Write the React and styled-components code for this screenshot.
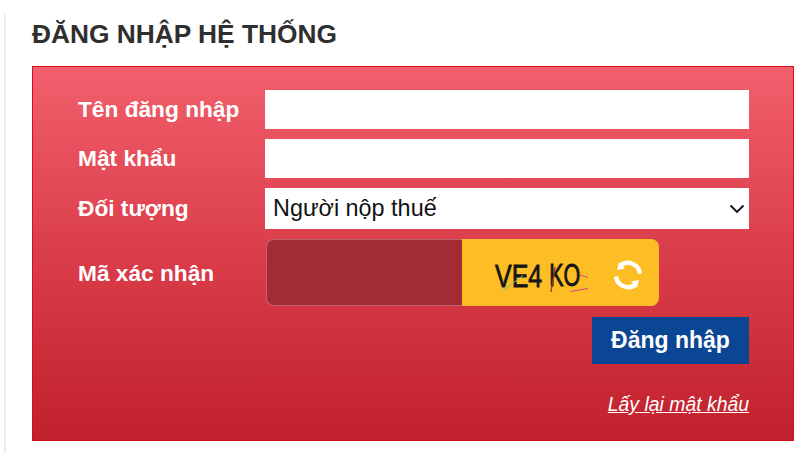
import React from "react";
import styled, { createGlobalStyle } from "styled-components";

const GlobalStyle = createGlobalStyle`
  html, body {
    margin: 0;
    padding: 0;
    background: #fff;
    overflow: hidden;
  }
  * { box-sizing: border-box; }
`;

const App = () => (
  <>
    <GlobalStyle />
    <Page>
      <Content>
        <Title>ĐĂNG NHẬP HỆ THỐNG</Title>
        <Panel>
          <Row>
            <Label>Tên đăng nhập</Label>
            <TextInput type="text" />
          </Row>
          <Row>
            <Label>Mật khẩu</Label>
            <TextInput type="password" />
          </Row>
          <Row>
            <Label>Đối tượng</Label>
            <SelectBox>
              <span>Người nộp thuế</span>
              <svg width="16" height="10" viewBox="0 0 16 10" fill="none">
                <path d="M1.5 1.5 L8 8 L14.5 1.5" stroke="#111" strokeWidth="1.9" />
              </svg>
            </SelectBox>
          </Row>
          <CaptchaRow>
            <CaptchaLabel>Mã xác nhận</CaptchaLabel>
            <CaptchaGroup>
              <CaptchaInput type="text" />
              <CaptchaBox>
                <CaptchaImage>
                  <CaptchaText $size={25} $stretch={1.28}>VE4</CaptchaText>
                  <CaptchaText $size={21.5} $stretch={1.49}>KO</CaptchaText>
                  <Scribble width="110" height="40" viewBox="0 0 110 40" fill="none">
                    <path d="M13 37.5 L33 22.5" stroke="#6fbf9a" strokeWidth="1" />
                    <path d="M65 14 L61 39" stroke="#8a3a20" strokeWidth="1.3" />
                    <path d="M90 22 L98 24.5" stroke="#c9506a" strokeWidth="1" />
                    <path d="M80 38.5 L98 35.5" stroke="#d8407a" strokeWidth="1" />
                  </Scribble>
                </CaptchaImage>
                <RefreshIcon width="32" height="32" viewBox="0 0 32 32" fill="none">
                  <path d="M28 14.5 A12.2 12.2 0 0 0 8 6.8" stroke="#fff" strokeWidth="4.4" />
                  <path d="M4 17.5 A12.2 12.2 0 0 0 24 25.2" stroke="#fff" strokeWidth="4.4" />
                  <path d="M5 11 L7 3.5 L13 9.5 Z" fill="#fff" />
                  <path d="M27 21 L25 28.5 L19 22.5 Z" fill="#fff" />
                </RefreshIcon>
              </CaptchaBox>
            </CaptchaGroup>
          </CaptchaRow>
          <Actions>
            <SubmitButton>Đăng nhập</SubmitButton>
            <ForgotLink href="#">Lấy lại mật khẩu</ForgotLink>
          </Actions>
        </Panel>
      </Content>
    </Page>
  </>
);

export default App;

const Page = styled.div`
  width: 800px;
  height: 453px;
  padding: 14px 6px 0 4px;
  font-family: "Liberation Sans", Arial, sans-serif;
`;

const Content = styled.div`
  height: 100%;
  border-left: 2px solid #eeeeee;
  padding-left: 26px;
`;

const Title = styled.h2`
  margin: 0;
  height: 52px;
  padding-top: 5px;
  font-size: 26.3px;
  line-height: 30px;
  font-weight: bold;
  color: #2f2f2f;
`;

const Panel = styled.div`
  width: 762px;
  height: 375px;
  padding: 23px 44px 0 45px;
  border: 1px solid #d40f1c;
  background: linear-gradient(to bottom, #f25f6c 0%, #d83a47 55%, #c0212c 100%);
`;

const Row = styled.div`
  display: flex;
  align-items: center;
  margin-bottom: 10px;
`;

const Label = styled.label`
  width: 187px;
  flex: none;
  font-size: 22.7px;
  font-weight: bold;
  color: #fff;
`;

const TextInput = styled.input`
  width: 484px;
  height: 39px;
  border: none;
  background: #fff;
  display: block;
`;

const SelectBox = styled.div`
  width: 484px;
  height: 41px;
  padding: 0 4px 0 8px;
  display: flex;
  align-items: center;
  justify-content: space-between;
  background: #fff;
  color: #111;
  font-size: 23.4px;
`;

const CaptchaRow = styled.div`
  display: flex;
  align-items: flex-start;
`;

const CaptchaLabel = styled(Label)`
  padding-top: 21px;
  line-height: 26px;
`;

const CaptchaGroup = styled.div`
  display: flex;
  height: 67px;
  margin-left: 1px;
`;

const CaptchaInput = styled.input`
  width: 196px;
  height: 67px;
  background: #a22c35;
  border: 1px solid #c0656d;
  border-right: none;
  border-radius: 8px 0 0 8px;
`;

const CaptchaBox = styled.div`
  width: 197px;
  height: 67px;
  padding: 0 15px 0 28px;
  display: flex;
  align-items: center;
  justify-content: space-between;
  background: #fdbe25;
  border-radius: 0 8px 8px 0;
`;

const CaptchaImage = styled.div`
  position: relative;
  width: 110px;
  height: 40px;
  padding: 0 0 1.5px 5px;
  display: flex;
  align-items: flex-end;
  gap: 7px;
`;

const CaptchaText = styled.span`
  display: block;
  font-size: ${(p) => p.$size}px;
  line-height: 1;
  color: #151515;
  -webkit-text-stroke: 0.6px #151515;
  transform: scaleY(${(p) => p.$stretch});
  transform-origin: 50% 84.7%;
`;

const Scribble = styled.svg`
  position: absolute;
  left: 0;
  top: 0;
`;

const RefreshIcon = styled.svg`
  display: block;
  margin-top: 5px;
`;

const Actions = styled.div`
  display: flex;
  flex-direction: column;
  align-items: flex-end;
  margin-top: 11px;
`;

const SubmitButton = styled.button`
  width: 157px;
  height: 47px;
  border: none;
  background: #0b4695;
  color: #fff;
  font-family: "Liberation Sans", Arial, sans-serif;
  font-size: 23px;
  font-weight: bold;
`;

const ForgotLink = styled.a`
  margin-top: 29px;
  color: #fff;
  font-size: 19.4px;
  font-style: italic;
  text-decoration: underline;
`;
